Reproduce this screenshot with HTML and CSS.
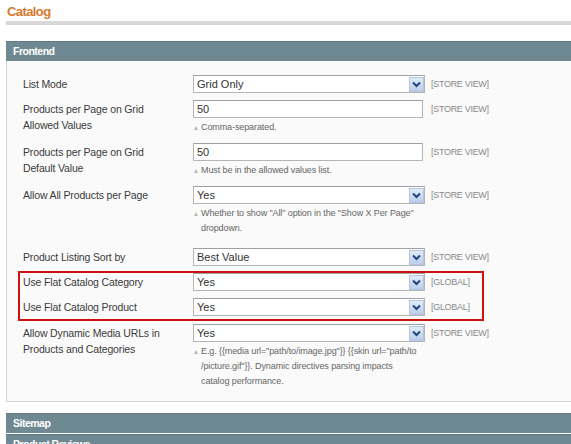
FILE: index.html
```html
<!DOCTYPE html>
<html>
<head>
<meta charset="utf-8">
<link rel="stylesheet" href="styles.css">
</head>
<body>
<div class="page">
  <h3 class="title">Catalog</h3>
  <div class="rule"></div>

  <div class="section">
    <div class="bar">Frontend</div>
    <div class="panel">
      <div class="row">
        <div class="label">List Mode</div>
        <div class="value"><div class="select"><span>Grid Only</span><i class="arrow"><svg width="9" height="7" viewBox="0 0 9 7"><polyline points="1,1.5 4.5,5 8,1.5" fill="none" stroke="#23457f" stroke-width="2"/></svg></i></div></div>
        <div class="scope">[STORE VIEW]</div>
      </div>
      <div class="row">
        <div class="label">Products per Page on Grid<br>Allowed Values</div>
        <div class="value"><div class="input">50</div><div class="note">Comma-separated.</div></div>
        <div class="scope">[STORE VIEW]</div>
      </div>
      <div class="row">
        <div class="label">Products per Page on Grid<br>Default Value</div>
        <div class="value"><div class="input">50</div><div class="note">Must be in the allowed values list.</div></div>
        <div class="scope">[STORE VIEW]</div>
      </div>
      <div class="row">
        <div class="label">Allow All Products per Page</div>
        <div class="value"><div class="select"><span>Yes</span><i class="arrow"><svg width="9" height="7" viewBox="0 0 9 7"><polyline points="1,1.5 4.5,5 8,1.5" fill="none" stroke="#23457f" stroke-width="2"/></svg></i></div><div class="note note-tall">Whether to show "All" option in the "Show X Per Page"<br>dropdown.</div></div>
        <div class="scope">[STORE VIEW]</div>
      </div>
      <div class="row">
        <div class="label">Product Listing Sort by</div>
        <div class="value"><div class="select"><span>Best Value</span><i class="arrow"><svg width="9" height="7" viewBox="0 0 9 7"><polyline points="1,1.5 4.5,5 8,1.5" fill="none" stroke="#23457f" stroke-width="2"/></svg></i></div></div>
        <div class="scope">[STORE VIEW]</div>
      </div>
      <div class="highlight">
        <div class="row">
          <div class="label">Use Flat Catalog Category</div>
          <div class="value"><div class="select"><span>Yes</span><i class="arrow"><svg width="9" height="7" viewBox="0 0 9 7"><polyline points="1,1.5 4.5,5 8,1.5" fill="none" stroke="#23457f" stroke-width="2"/></svg></i></div></div>
          <div class="scope">[GLOBAL]</div>
        </div>
        <div class="row row-last">
          <div class="label">Use Flat Catalog Product</div>
          <div class="value"><div class="select"><span>Yes</span><i class="arrow"><svg width="9" height="7" viewBox="0 0 9 7"><polyline points="1,1.5 4.5,5 8,1.5" fill="none" stroke="#23457f" stroke-width="2"/></svg></i></div></div>
          <div class="scope">[GLOBAL]</div>
        </div>
      </div>
      <div class="row">
        <div class="label">Allow Dynamic Media URLs in<br>Products and Categories</div>
        <div class="value"><div class="select"><span>Yes</span><i class="arrow"><svg width="9" height="7" viewBox="0 0 9 7"><polyline points="1,1.5 4.5,5 8,1.5" fill="none" stroke="#23457f" stroke-width="2"/></svg></i></div><div class="note">E.g. {{media url="path/to/image.jpg"}} {{skin url="path/to<br>/picture.gif"}}. Dynamic directives parsing impacts<br>catalog performance.</div></div>
        <div class="scope">[STORE VIEW]</div>
      </div>
    </div>
  </div>

  <div class="section collapsed">
    <div class="bar">Sitemap</div>
  </div>
  <div class="section collapsed second">
    <div class="bar">Product Reviews</div>
  </div>
</div>
</body>
</html>
```

FILE: styles.css
```css
html, body {
  margin: 0;
  padding: 0;
  background: #ffffff;
  overflow: hidden;
}
body {
  font-family: "Liberation Sans", Arial, sans-serif;
  color: #333;
}
.page {
  padding-left: 6px;
  width: 600px;
}
.title {
  margin: 0;
  padding: 4px 0 0 1px;
  height: 17px;
  font-size: 13px;
  line-height: 16px;
  font-weight: bold;
  color: #d8782f;
  letter-spacing: -0.6px;
}
.rule {
  height: 4px;
  background: #d9d9d9;
}
.section {
  margin-top: 16px;
}
.section.collapsed {
  margin-top: 11px;
}
.section.second {
  margin-top: 1px;
}
.bar {
  height: 19px;
  background: #6f8992;
  border-top: 1px solid #5f7a84;
  color: #fff;
  font-weight: bold;
  font-size: 10.5px;
  line-height: 19px;
  padding-left: 7px;
  letter-spacing: -0.5px;
}
.panel {
  background: #fafafa;
  border-left: 1px solid #d6d6d6;
  border-bottom: 1px solid #d6d6d6;
  padding: 14px 0 4px 16px;
}
.row {
  display: grid;
  grid-template-columns: 164px 232px auto;
  column-gap: 6px;
  padding-bottom: 7px;
  align-items: start;
}
.label {
  font-size: 10.5px;
  line-height: 16px;
  padding-top: 1px;
  color: #3a3a3a;
  letter-spacing: -0.15px;
}
.select, .input {
  height: 16px;
  box-sizing: content-box;
  border: 1px solid #b5b5b5;
  border-top-color: #a0a0a0;
  background: #fff;
  font-size: 11px;
  line-height: 16px;
  padding-left: 3px;
  color: #333;
  display: flex;
  align-items: center;
  justify-content: space-between;
}
.input {
  width: 225px;
}
.arrow {
  width: 15px;
  height: 15px;
  margin-right: 0;
  background: linear-gradient(#e3ebf7, #bccdea);
  border: 1px solid #b3c4e0;
  box-sizing: border-box;
  display: flex;
  align-items: center;
  justify-content: center;
}
.note {
  margin-top: 2px;
  padding-bottom: 1px;
  padding-left: 8px;
  position: relative;
  font-size: 9px;
  line-height: 15px;
  color: #666;
  letter-spacing: -0.1px;
  white-space: nowrap;
}
.note-tall {
  padding-bottom: 5px;
}
.note::before {
  content: "";
  position: absolute;
  left: 1px;
  top: 6px;
  border-left: 2.5px solid transparent;
  border-right: 2.5px solid transparent;
  border-bottom: 4px solid #bbb;
}
.scope {
  font-size: 9px;
  line-height: 18px;
  color: #8a8a8a;
  letter-spacing: -0.3px;
}
.highlight {
  width: 466px;
  box-sizing: border-box;
  margin: -2px 0 3px -5px;
  padding-left: 3px;
  border: 2px solid #cc1111;
}
.highlight .row-last {
  padding-bottom: 3px;
}
```
